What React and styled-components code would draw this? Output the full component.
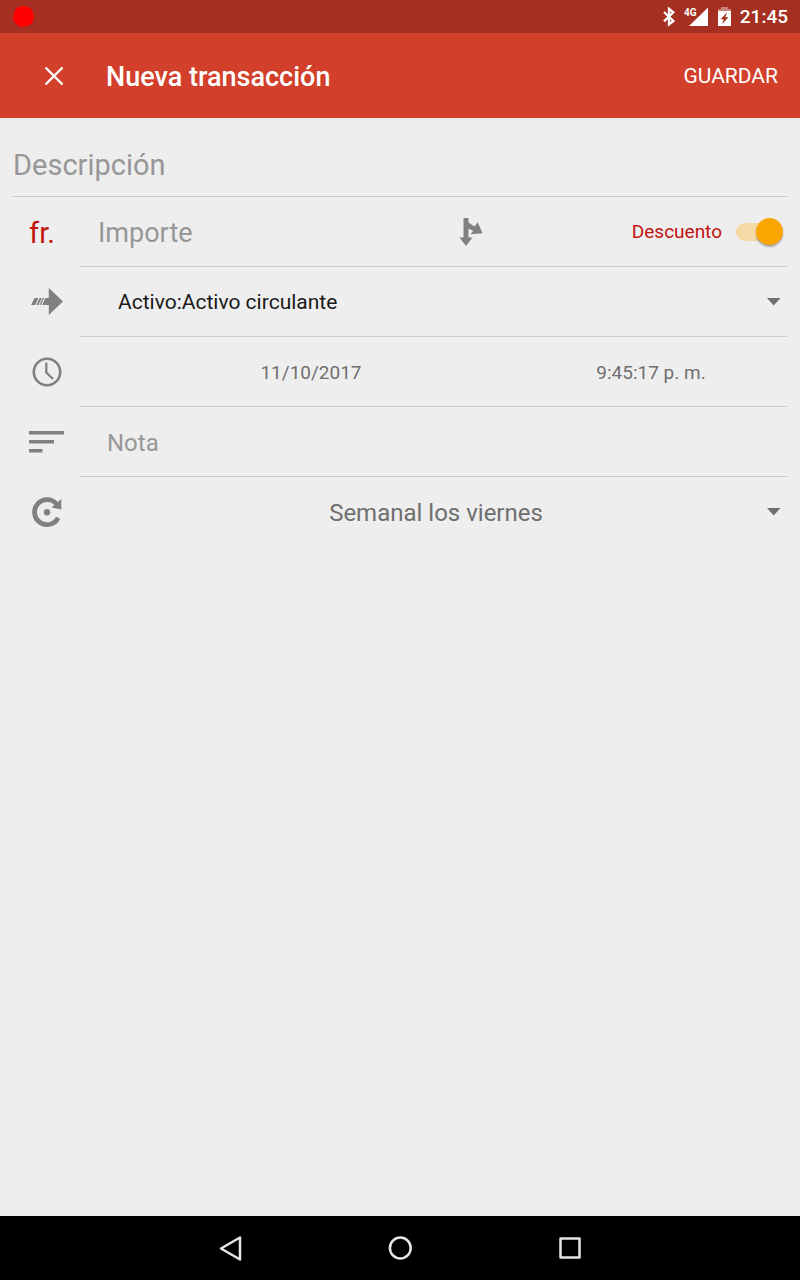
import React, { useState } from 'react';
import styled, { createGlobalStyle } from 'styled-components';

const GlobalStyle = createGlobalStyle`
  * { box-sizing: border-box; }
  body {
    margin: 0;
    background: #eeeeee;
    font-family: Roboto, "Noto Sans", sans-serif;
  }
  button, input, select {
    margin: 0;
    padding: 0;
    border: 0;
    background: none;
    font-family: inherit;
    color: inherit;
    outline: none;
  }
  svg { display: block; flex: none; }
`;

const Screen = styled.div`
  min-height: 100vh;
  display: flex;
  flex-direction: column;
`;

const StatusBar = styled.div`
  height: 33px;
  padding: 0 12px 0 13px;
  display: flex;
  align-items: center;
  background: #a53021;
  color: #fff;
`;

const RecordDot = styled.span`
  width: 21px;
  height: 21px;
  border-radius: 50%;
  background: #ff0000;
  margin-right: auto;
`;

const StatusIcons = styled.div`
  display: flex;
  align-items: center;
  gap: 9px;
`;

const Clock = styled.time`
  font-size: 19px;
  line-height: 24px;
  font-weight: 500;
`;

const AppBar = styled.header`
  height: 85px;
  padding: 0 22px 0 32px;
  display: flex;
  align-items: center;
  background: #d23f2b;
  color: #fff;
`;

const CloseButton = styled.button`
  width: 44px;
  height: 44px;
  display: grid;
  place-items: center;
`;

const Title = styled.h1`
  flex: 1;
  margin: 0 0 0 30px;
  padding-top: 2px;
  font-size: 27px;
  line-height: 32px;
  font-weight: 500;
`;

const SaveButton = styled.button`
  font-size: 21px;
  line-height: 32px;
  text-transform: uppercase;
`;

const Form = styled.form`
  flex: 1;
  padding: 0 13px;
`;

const TextInput = styled.input`
  flex: 1;
  min-width: 0;
  width: 100%;
  height: 100%;
  padding-top: 2px;
  font-size: ${(p) => p.$size}px;
  color: #212121;
  &::placeholder { color: #979797; opacity: 1; }
`;

const DescriptionRow = styled.div`
  height: 79px;
  padding-top: 14px;
  border-bottom: 1px solid #cdcdcd;
`;

const Row = styled.div`
  height: 70px;
  display: flex;
`;

const Lead = styled.div`
  width: 67px;
  display: grid;
  place-items: center;
  padding-bottom: 1px;
  color: #808080;
`;

const Currency = styled.label`
  padding-top: 2px;
  margin-right: 9px;
  color: #c1130f;
  font-size: 29px;
  line-height: 32px;
`;

const Field = styled.div`
  flex: 1;
  min-width: 0;
  display: flex;
  align-items: center;
  padding-left: ${(p) => p.$inset || 0}px;
  border-bottom: 1px solid ${(p) => (p.$last ? 'transparent' : '#cdcdcd')};
`;

const AmountArea = styled.div`
  flex: 1;
  height: 100%;
  display: flex;
`;

const SplitButton = styled.button`
  width: 44px;
  height: 44px;
  display: grid;
  place-items: center;
  color: #808080;
`;

const SwitchArea = styled.div`
  flex: 0 0 294px;
  display: flex;
  justify-content: flex-end;
`;

const SwitchLabel = styled.label`
  display: flex;
  align-items: center;
  gap: 14px;
  padding-right: 4px;
  color: #c1130f;
  font-size: 19px;
  line-height: 24px;
`;

const Toggle = styled.input.attrs({ type: 'checkbox', role: 'switch' })`
  appearance: none;
  width: 47px;
  height: 18px;
  border-radius: 9px;
  display: flex;
  align-items: center;
  background: #bdbdbd;
  &::before {
    content: '';
    width: 27px;
    height: 27px;
    border-radius: 50%;
    background: #fafafa;
    box-shadow: 0 2px 2px rgba(0, 0, 0, 0.3);
  }
  &:checked {
    background: #f5daa5;
    justify-content: flex-end;
  }
  &:checked::before { background: #fba600; }
`;

const Picker = styled.div`
  flex: 1;
  height: 100%;
  display: grid;
  align-items: center;
  padding-right: 6px;
  > * { grid-area: 1 / 1; }
  > svg { justify-self: end; pointer-events: none; color: #6f6f6f; }
`;

const Select = styled.select`
  appearance: none;
  width: 100%;
  height: 100%;
  padding-top: ${(p) => p.$top || 0}px;
  padding-right: 16px;
  font-size: ${(p) => p.$size}px;
  color: ${(p) => p.$color};
  text-align-last: ${(p) => p.$align || 'left'};
`;

const MomentButton = styled.button`
  flex: ${(p) => p.$grow} 1 0;
  height: 100%;
  padding-top: 2px;
  font-size: 19px;
  color: #6f6f6f;
`;

const NavBar = styled.nav`
  height: 64px;
  display: flex;
  justify-content: center;
  gap: 106px;
  background: #000;
  color: #e6e6e6;
`;

const NavButton = styled.button`
  width: 64px;
  height: 64px;
  display: grid;
  place-items: center;
`;

const BluetoothIcon = () => (
  <svg width="12" height="20" viewBox="0 0 12 20" fill="none" stroke="currentColor" strokeWidth="2.3">
    <path d="M1 5 10.300 14 6 17.300V1.800L10.300 5.400 1 14.400" />
  </svg>
);

const SignalIcon = () => (
  <svg width="25" height="20" viewBox="0 0 25 20" fill="currentColor">
    <path d="M24 0.500V19H5z" />
    <text x="0" y="9" fontSize="10" fontWeight="700" fontFamily="Roboto, sans-serif">4G</text>
  </svg>
);

const BatteryIcon = () => (
  <svg width="13" height="20" viewBox="0 0 13 20">
    <path d="M3 0h7v2H13v3H0V2h3z" fill="#c9837a" />
    <path d="M0 4h13v15H0z" fill="#fff" />
    <path d="M9 5.500 2.500 12.200h3.200L4.200 17 10.500 10.200H7.300z" fill="#a53021" />
  </svg>
);

const CloseIcon = () => (
  <svg width="20" height="20" viewBox="0 0 20 20" fill="none" stroke="currentColor" strokeWidth="2.4">
    <path d="M1.500 1.500l17 17M18.500 1.500l-17 17" />
  </svg>
);

const SplitIcon = () => (
  <svg width="24" height="28" viewBox="0 0 24 28" fill="currentColor">
    <path d="M4.500 0H9.500V4.500L15.500 8.500 18.700 4.200 23.500 15.300 11.500 16.300 14.200 13 9.500 10.500V19.500H13.500L7 28 0.500 19.500H4.500z" />
  </svg>
);

const TransferIcon = () => (
  <svg width="32" height="27" viewBox="0 0 32 27" fill="currentColor">
    <path d="M17.800 0 32 13.500 17.800 27V17H11L14.500 10H17.800z" />
    <path d="M3.500 10H7.600L4.100 17H0zM8.800 10H10.900L7.400 17H5.300zM11.900 10H13.300L9.800 17H8.400z" />
  </svg>
);

const ClockIcon = () => (
  <svg width="30" height="30" viewBox="0 0 30 30" fill="none" stroke="currentColor" strokeWidth="2.600">
    <circle cx="15" cy="15" r="13.200" />
    <path d="M14.300 5.500V15.500L21 22" strokeWidth="2.300" />
  </svg>
);

const NoteIcon = () => (
  <svg width="35" height="22" viewBox="0 0 35 22" fill="currentColor">
    <path d="M0 0h35v3.600H0zM0 9h25v3.600H0zM0 18h13.500v3.600H0z" />
  </svg>
);

const RepeatIcon = () => (
  <svg width="30" height="30" viewBox="0 0 30 30" fill="none">
    <path d="M26.200 20.800A12.500 12.500 0 1 1 25 7.500" stroke="currentColor" strokeWidth="4.800" />
    <path d="M29.300 2V12.500L19.500 10.500z" fill="currentColor" />
    <circle cx="15" cy="15.200" r="3.200" fill="currentColor" />
  </svg>
);

const CaretIcon = () => (
  <svg width="14" height="8" viewBox="0 0 14 8" fill="currentColor">
    <path d="M0 0h13.500L6.700 7.500z" />
  </svg>
);

const BackIcon = () => (
  <svg width="26" height="26" viewBox="0 0 26 26" fill="none" stroke="currentColor" strokeWidth="2.500" strokeLinejoin="round">
    <path d="M23 2.500V24.500L4 13.500z" />
  </svg>
);

const HomeIcon = () => (
  <svg width="24" height="24" viewBox="0 0 24 24" fill="none" stroke="currentColor" strokeWidth="2.500">
    <circle cx="12.300" cy="12" r="10.400" />
  </svg>
);

const RecentsIcon = () => (
  <svg width="22" height="22" viewBox="0 0 22 22" fill="none" stroke="currentColor" strokeWidth="2.500" strokeLinejoin="round">
    <rect x="1.500" y="1.500" width="19" height="19" />
  </svg>
);

export default function App() {
  const [discount, setDiscount] = useState(true);
  return (
    <Screen>
      <GlobalStyle />
      <StatusBar>
        <RecordDot />
        <StatusIcons>
          <BluetoothIcon />
          <SignalIcon />
          <BatteryIcon />
          <Clock>21:45</Clock>
        </StatusIcons>
      </StatusBar>
      <AppBar>
        <CloseButton type="button" aria-label="Cerrar"><CloseIcon /></CloseButton>
        <Title>Nueva transacción</Title>
        <SaveButton type="submit" form="transaction">Guardar</SaveButton>
      </AppBar>
      <Form id="transaction" onSubmit={(e) => e.preventDefault()}>
        <DescriptionRow>
          <TextInput $size={29} aria-label="Descripción" placeholder="Descripción" />
        </DescriptionRow>
        <Row>
          <Lead><Currency htmlFor="amount">fr.</Currency></Lead>
          <Field $inset={18}>
            <AmountArea>
              <TextInput id="amount" $size={27} inputMode="decimal" placeholder="Importe" />
            </AmountArea>
            <SplitButton type="button" aria-label="Dividir"><SplitIcon /></SplitButton>
            <SwitchArea>
              <SwitchLabel>
                Descuento
                <Toggle checked={discount} onChange={(e) => setDiscount(e.target.checked)} />
              </SwitchLabel>
            </SwitchArea>
          </Field>
        </Row>
        <Row>
          <Lead><TransferIcon /></Lead>
          <Field $inset={38}>
            <Picker>
              <Select $size={21} $color="#1a1a1a" aria-label="Cuenta">
                <option>Activo:Activo circulante</option>
              </Select>
              <CaretIcon />
            </Picker>
          </Field>
        </Row>
        <Row>
          <Lead><ClockIcon /></Lead>
          <Field $inset={27}>
            <MomentButton type="button" $grow={3}>11/10/2017</MomentButton>
            <MomentButton type="button" $grow={2}>9:45:17 p. m.</MomentButton>
          </Field>
        </Row>
        <Row>
          <Lead><NoteIcon /></Lead>
          <Field $inset={27}>
            <TextInput $size={24} aria-label="Nota" placeholder="Nota" />
          </Field>
        </Row>
        <Row>
          <Lead><RepeatIcon /></Lead>
          <Field $inset={27} $last>
            <Picker>
              <Select $size={24} $top={2} $color="#6f6f6f" $align="center" aria-label="Repetición">
                <option>Semanal los viernes</option>
              </Select>
              <CaretIcon />
            </Picker>
          </Field>
        </Row>
      </Form>
      <NavBar>
        <NavButton type="button" aria-label="Atrás"><BackIcon /></NavButton>
        <NavButton type="button" aria-label="Inicio"><HomeIcon /></NavButton>
        <NavButton type="button" aria-label="Recientes"><RecentsIcon /></NavButton>
      </NavBar>
    </Screen>
  );
}
